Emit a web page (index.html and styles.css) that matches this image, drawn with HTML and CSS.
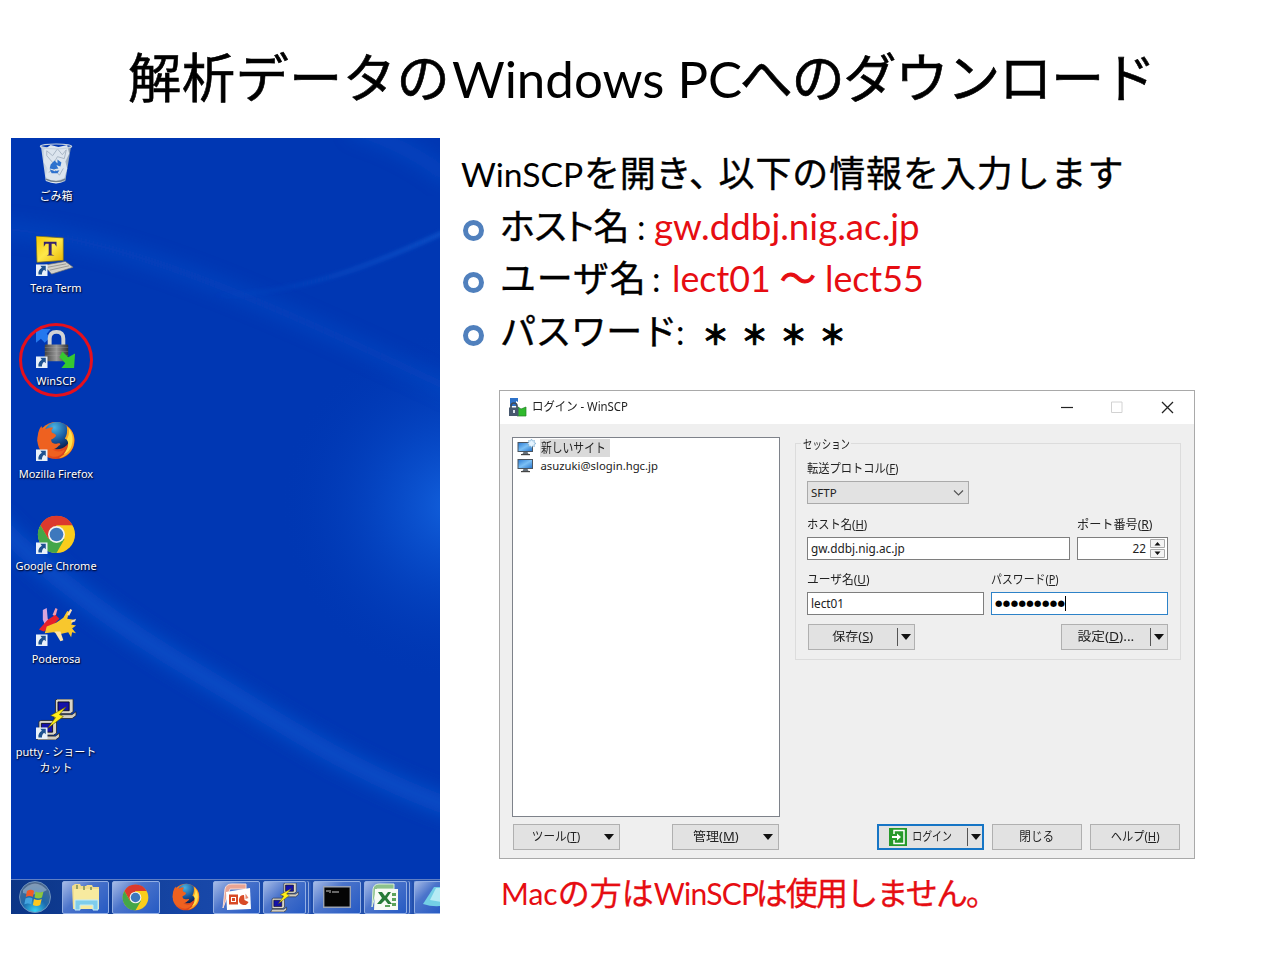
FILE: index.html
```html
<!DOCTYPE html>
<html lang="ja">
<head>
<meta charset="utf-8">
<title>解析データのWindows PCへのダウンロード</title>
<link rel="stylesheet" href="styles.css">
</head>
<body>
<svg class="defs" aria-hidden="true">
  <defs>
    <linearGradient id="gGlass" x1="0" x2="1"><stop offset="0" stop-color="#b9c8d8"/><stop offset=".5" stop-color="#eef3f8"/><stop offset="1" stop-color="#7f93ab"/></linearGradient>
    <linearGradient id="gLock" x1="0" x2="1"><stop offset="0" stop-color="#444"/><stop offset=".5" stop-color="#999"/><stop offset="1" stop-color="#333"/></linearGradient>
    <linearGradient id="gFox" x1="0" y1="0" x2="1" y2="1"><stop offset="0" stop-color="#f58220"/><stop offset=".6" stop-color="#e8501c"/><stop offset="1" stop-color="#c8331a"/></linearGradient>
    <radialGradient id="gGlobe" cx=".4" cy=".2" r=".8"><stop offset="0" stop-color="#49b4e4"/><stop offset=".6" stop-color="#17559c"/><stop offset="1" stop-color="#0b2354"/></radialGradient>
    <radialGradient id="gOrb" cx=".5" cy=".95" r=".9"><stop offset="0" stop-color="#35d5f5"/><stop offset=".45" stop-color="#1c69ad"/><stop offset="1" stop-color="#50698c"/></radialGradient>
    <linearGradient id="gYel" x1="0" y1="0" x2="1" y2="1"><stop offset="0" stop-color="#f5c800"/><stop offset=".5" stop-color="#ffe84a"/><stop offset="1" stop-color="#e8b400"/></linearGradient>
    <linearGradient id="gScr" x1="0" y1="0" x2="1" y2="1"><stop offset="0" stop-color="#2f7fd6"/><stop offset=".5" stop-color="#7cc0f5"/><stop offset="1" stop-color="#2a78cf"/></linearGradient>
    <symbol id="shortcut" viewBox="0 0 12 12"><rect width="12" height="12" fill="#e9f1fa"/><path d="M4.500 1.500H10V7L8.300 5.600C6.500 7 6 8.500 6.200 10.500H2.500C2 7.500 3.500 5 6 3.500z" fill="#1f5290"/></symbol>
    <symbol id="firefox" viewBox="0 0 40 40">
      <circle cx="20" cy="20" r="19" fill="url(#gFox)"/>
      <circle cx="21" cy="15" r="14" fill="url(#gGlobe)"/>
      <path d="M31 5c7 5 9 12 7 20-2 7-8 12-15 13 7-4 10-9 10-16-1-2-2-3-4-4 2-3 3-7 2-13z" fill="#f9a825"/>
      <path d="M33 7c4 6 5 12 3 18-1 4-4 7-8 9 4-5 6-11 3-15 2-3 3-7 2-12z" fill="#ffe14d"/>
      <path d="M5 5c0 2 2 3 5 3 2-1 5-2 7-1-2 2-2 4-1 5 3 1 4 2 4 3-1 2-3 3-5 4 0 2 1 4 3 4 3 1 4-1 6 0 1 1 0 2-1 2-2 2-4 4-7 4 4 3 9 3 13 0-2 6-8 9-14 7C7 33 2 27 1 20 1 14 2 9 5 5z" fill="#ee6120"/>
    </symbol>
    <symbol id="chrome" viewBox="0 0 40 40">
      <circle cx="20" cy="20" r="19" fill="#f9cd1c"/>
      <path d="M3.500 10.500A19 19 0 0 1 36.500 10.500H20L11.800 24.800z" fill="#dc3a2d"/>
      <path d="M3.500 10.500A19 19 0 0 0 20 39l8.200-14.300L20 20l-8.200 4.700z" fill="#44a648"/>
      <circle cx="20" cy="20" r="8.700" fill="#f3f3ef"/><circle cx="20" cy="20" r="7" fill="#3d78bd"/>
    </symbol>
    <symbol id="putty" viewBox="0 0 42 42">
      <g id="pc"><path d="M20 1l2-1h16v13l-3 2H20z" fill="#d8d4c8" stroke="#222" stroke-width=".8"/><path d="M22.500 3H34v9H22.500z" fill="#1512a8" stroke="#000" stroke-width=".8"/><path d="M20 16h17l4-3v4l-4 3H18z" fill="#cfcbbf" stroke="#222" stroke-width=".8"/></g>
      <use href="#pc" x="-17" y="22"/>
      <path d="M31 8L15 17l5 2-8 11 16-12-4-2z" fill="#ffef1a" stroke="#554e00" stroke-width=".6"/>
    </symbol>
    <symbol id="monitor" viewBox="0 0 17 15"><path d="M.5 1h15.500v10H.5z" fill="#4b5560"/><path d="M1.500 2h13.500v8H1.500z" fill="url(#gScr)"/><path d="M6.500 11h4l1 2H5.500z" fill="#66707a"/><path d="M4 13h9v1.200H4z" fill="#444"/></symbol>
  </defs>
</svg>

<main class="slide">
  <h1 class="title"><span class="t1">解析データの</span><span class="en">Windows PC</span><span class="t2">へのダウンロード</span></h1>
  <div class="columns">
    <section class="desktop">
      <svg class="wallpaper" viewBox="0 0 429 776" preserveAspectRatio="none">
        <defs>
          <filter id="soft" x="-30%" y="-30%" width="160%" height="160%"><feGaussianBlur stdDeviation="9"/></filter>
          <filter id="soft2" x="-30%" y="-30%" width="160%" height="160%"><feGaussianBlur stdDeviation="2"/></filter>
          <radialGradient id="glow"><stop offset="0" stop-color="#1566e2" stop-opacity=".9"/><stop offset=".4" stop-color="#0a52d0" stop-opacity=".6"/><stop offset="1" stop-color="#0038b4" stop-opacity="0"/></radialGradient>
          <linearGradient id="fade" gradientUnits="userSpaceOnUse" x1="200" y1="0" x2="429" y2="0"><stop offset="0" stop-color="#1a67dc" stop-opacity="0"/><stop offset="1" stop-color="#1f70e2"/></linearGradient>
        </defs>
        <rect width="429" height="776" fill="#0037b3"/>
        <ellipse cx="445" cy="368" rx="175" ry="175" fill="url(#glow)"/>
        <path d="M-20 380C40 440 110 490 190 537S340 635 450 673" fill="none" stroke="#0a56d0" stroke-width="18" opacity=".8" filter="url(#soft)"/>
        <path d="M-20 90C100 95 250 160 450 256" fill="none" stroke="#0d53ce" stroke-width="12" opacity=".5" filter="url(#soft)"/>
        <path d="M200 158C290 156 360 128 440 91" fill="none" stroke="url(#fade)" stroke-width="3" opacity=".65" filter="url(#soft2)"/>
        <path d="M340 -10Q400 8 440 42" fill="none" stroke="#0e54cf" stroke-width="14" opacity=".5" filter="url(#soft)"/>
      </svg>
      <ul class="icons">
        <li><svg class="ico" viewBox="0 0 42 42"><path d="M5 3l5 36q11 5 20 0l6-36q-15 5-31 0z" fill="url(#gGlass)"/><path d="M8 7l7-5 8 2 9-2 2 9-4 8 2 7-3 10-13 3-6-5 2-8-4-6z" fill="#dce5ee"/><path d="M11 8l6 5 5-7 5 6 4-5-2 9-7-2-4 7-7-8zM13 30l6-3 5 6 4-7" fill="none" stroke="#a7b5c4" stroke-width="1"/><ellipse cx="20.500" cy="3.500" rx="16" ry="2.500" fill="none" stroke="#c7d2de" stroke-width="1.200"/><path d="M15 22l4-4 4 4-2 1 2 3-5 1-4-1zM22 17l4 3-1 4-3-1zM14 27l5 2 5-1-2 3h-6z" fill="#2e72ce"/><path d="M10 37q11 5 20 0" fill="none" stroke="#71818f" stroke-width="1.500"/></svg><span>ごみ箱</span></li>
        <li><svg class="ico" viewBox="0 0 42 42"><path d="M0 0l28 2v23L1 27z" fill="url(#gYel)" stroke="#776d28" stroke-width=".8"/><path d="M8 6h13v5l-2-3h-3v11l3 1h-8l2-1V8h-3l-2 3z" fill="#35216f"/><path d="M8 30l22-4 8 6-22 7z" fill="#d3d1ca" stroke="#75756e" stroke-width=".7"/><path d="M12 32l19-3.500M14 35l20-4.500" stroke="#8f8f89" stroke-width=".8"/><use href="#shortcut" x="0" y="29" width="12" height="12"/></svg><span>Tera Term</span></li>
        <li class="marked"><svg class="ico" viewBox="0 0 42 42"><path d="M0 1h15l-4 5 3 4-5 5-4-4-5 4z" fill="#2478ee"/><path d="M14 20V11q0-7 7-7t7 7v9" fill="none" stroke="#d1d3d5" stroke-width="4"/><rect x="9" y="17" width="24" height="17" rx="1" fill="url(#gLock)"/><path d="M9 20h24M9 24h24M9 28h24" stroke="#bbb" stroke-opacity=".25"/><path d="M27 24l6 6 7-4-1 15H26l4-5-6-6z" fill="#36c82f"/><use href="#shortcut" x="0" y="29" width="12" height="12"/></svg><span>WinSCP</span><i class="ring"></i></li>
        <li><svg class="ico" viewBox="0 0 42 42"><use href="#firefox" width="41" height="40"/><use href="#shortcut" x="0" y="29" width="12" height="12"/></svg><span>Mozilla Firefox</span></li>
        <li><svg class="ico" viewBox="0 0 42 42"><use href="#chrome" x="1" y="1" width="40" height="40"/><use href="#shortcut" x="0" y="29" width="12" height="12"/></svg><span>Google Chrome</span></li>
        <li><svg class="ico" viewBox="0 0 42 42"><path d="M7 4l4-2 1 11 2 3-5 3-2-5z" fill="#d9a5dc"/><path d="M17 9l3-7 2 1-2 8z" fill="#ef9baf"/><path d="M3 24l9-10 8-5 4 4-7 7-9 6z" fill="#e8202a"/><path d="M11 21l10-4 7-5 4-7 2 1-2 7 7 1-3 5 5 1-4 3 4 5-4-1-1 5-3-5-9 2-6-2-9 1z" fill="#f8c72d"/><path d="M19 26l6 10 3-1-3-9" fill="#ffe3a6"/><path d="M32 9l3-6 2 1-3 6M36 15l5-2-1 3-4 1" fill="#f6dcb4"/><use href="#shortcut" x="0" y="29" width="12" height="12"/></svg><span>Poderosa</span></li>
        <li><svg class="ico" viewBox="0 0 42 42"><use href="#putty" width="42" height="42"/><use href="#shortcut" x="0" y="29" width="12" height="12"/></svg><span>putty - ショート<br>カット</span></li>
      </ul>
      <div class="taskbar">
        <div class="slot orb"><svg width="34" height="34" viewBox="0 0 34 34"><circle cx="17" cy="17" r="15.500" fill="url(#gOrb)" stroke="#6c91bd" stroke-width="1"/><path d="M5 10Q17-3 29 10Q17 17 5 13z" fill="#cfe0f0" opacity=".4"/><path d="M9 11q4-2.500 7 0l-1.200 6q-3.500-2-7 0z" fill="#ef5a29"/><path d="M17.500 11.500q4 2 8 0l-1.500 6q-3.500 2-7.500 0z" fill="#8cc63e"/><path d="M7.500 18.500q4-2 7 0l-1.200 6q-3.500-2-7 0z" fill="#44a5e0"/><path d="M16 19q4 2 7.700 0l-1.500 6q-3.500 2-7.300 0z" fill="#fdc820"/></svg></div>
        <div class="slot open"><svg width="30" height="28" viewBox="0 0 30 28"><path d="M1 3l3-2h5l1 2h5l1-1h5l1 2h6v22H2z" fill="#f0dd8e"/><path d="M3 6h25v20H3z" fill="#f7ea9f"/><path d="M6 2v4M13 3v4M20 4v3" stroke="#7a8f57" stroke-width="1.500"/><path d="M4 17h23v10h-5v-5H9v5H4z" fill="#7fcdec" stroke="#c6ecf7" stroke-width="1"/></svg></div>
        <div class="slot open"><svg width="27" height="27"><use href="#chrome"/></svg></div>
        <div class="slot"><svg width="28" height="28"><use href="#firefox"/></svg></div>
        <div class="slot open"><svg width="30" height="28" viewBox="0 0 30 28"><path d="M1 25L3 6Q4 1 10 1h14v5H8z" fill="#e9a494" stroke="#f9dcd5"/><path d="M4 9l24-4 1 21-24 1z" fill="#fff"/><path d="M7 11.500h9v10H7z" fill="#d84b28"/><path d="M9 14h5v5H9z" fill="#fff"/><path d="M10 15h3v3h-3z" fill="#d84b28"/><path d="M22 12a5 5 0 1 0 4.500 7l-4-2z" fill="#d84b28"/><path d="M23.500 10.500l3 4.500-3 1z" fill="#e98a6e"/></svg></div>
        <div class="slot open stack"><svg width="29" height="29"><use href="#putty"/></svg></div>
        <div class="slot open"><svg width="28" height="22" viewBox="0 0 28 22"><path d="M.7.7h26.600v20.600H.7z" fill="#050505" stroke="#9aa3b5" stroke-width="1.400"/><path d="M3 5h3M7 4v3M9 6h7" stroke="#ccc"/></svg></div>
        <div class="slot open stack"><svg width="28" height="28" viewBox="0 0 28 28"><path d="M1 24L2 6Q3 1 8 1h15v5H6z" fill="#8cc18b" stroke="#def0dc"/><path d="M4 6h23v21H3z" fill="#f7fbf5"/><path d="M7 9h4l3 4 3-4h3l-4 6 5 6h-4l-3-4-4 4H6l5-6z" fill="#267a37"/><path d="M21 10h4v3h-4zM21 15h4v3h-4zM21 20h4v3h-4zM14 22h5v2h-5z" fill="#5ca35c"/></svg></div>
        <div class="slot open last"><svg width="18" height="24" viewBox="0 0 18 24"><path d="M0 19L11 2h7v19q-9 1-18-2z" fill="#73cfe5"/><path d="M7 15L13 3h5v14z" fill="#b5ebf4"/></svg></div>
      </div>
    </section>

    <section class="guide">
      <p class="lead"><span class="en">WinSCP</span><span class="ja1">を開き、</span><span class="ja2">以下の情報を入力します</span></p>
      <ul class="facts">
        <li><span class="name n1">ホスト名</span><span class="en colon c1">:</span><span class="en red">gw.ddbj.nig.ac.jp</span></li>
        <li><span class="name n2">ユーザ名</span><span class="en colon c2">:</span><span class="en red e2">lect01 <span class="wave">〜</span> lect55</span></li>
        <li><span class="name n3">パスワード</span><span class="en colon c3">:</span><span class="stars">＊＊＊＊</span></li>
      </ul>

      <div class="dialog">
        <header class="bar">
          <svg width="19" height="19" viewBox="0 0 19 19"><path d="M2 0h8v4l-2-1v5H2z" fill="#2d72c9"/><path d="M10 9l3 2 5-2v9h-9z" fill="#2fba2c" stroke="#237e26" stroke-width=".7"/><path d="M3 10V8q0-3 3-3t3 3v2" fill="none" stroke="#3d4a5b" stroke-width="1.700"/><path d="M1 9.500h9.500V18H1z" fill="#47586e"/><path d="M5 12h2v3H5z" fill="#dbe3ed"/></svg>
          <span class="cap"><span class="k k-cap">ログイン - WinSCP</span></span>
          <svg class="ctl" width="120" height="16" viewBox="0 0 120 16"><path d="M3 8.500h12" stroke="#222" stroke-width="1.200"/><path d="M53.500 3h10.500v10.500H53.500z" fill="none" stroke="#d2d2d2"/><path d="M104 3l11 11M115 3l-11 11" stroke="#222" stroke-width="1.300"/></svg>
        </header>
        <div class="work">
          <div class="sites">
            <div class="site"><svg width="20" height="17" viewBox="0 0 20 17"><use href="#monitor" y="2" width="17" height="15"/><path d="M14.500 0l1 2 2-.5-.5 2 2 1-2 1 .5 2-2-.5-1 2-1-2-2 .5.500-2-2-1 2-1-.5-2 2 .5z" fill="#e6f4ff" stroke="#6da5cf" stroke-width=".6"/></svg><span class="pick"><span class="k k-new">新しいサイト</span></span></div>
            <div class="site"><svg width="20" height="16" viewBox="0 0 20 16"><use href="#monitor" width="17" height="15"/></svg><span class="host">asuzuki@slogin.hgc.jp</span></div>
          </div>
          <div class="group">
            <span class="legend"><span class="k k-leg">セッション</span></span>
            <div class="field"><label><span class="k k-pro">転送プロトコル(<u>F</u>)</span></label><div class="box select">SFTP<svg width="11" height="8" viewBox="0 0 11 8"><path d="M1 1.500l4.500 4.500L10 1.500" fill="none" stroke="#555" stroke-width="1.200"/></svg></div></div>
            <div class="row">
              <div class="field grow"><label><span class="k k-host">ホスト名(<u>H</u>)</span></label><div class="box">gw.ddbj.nig.ac.jp</div></div>
              <div class="field port"><label><span class="k k-port">ポート番号(<u>R</u>)</span></label><div class="box num">22<svg width="16" height="19" viewBox="0 0 16 19"><path d="M.5.5h14v8H.5zM.5 10.500h14v8H.5z" fill="#f4f4f4" stroke="#aaa"/><path d="M4.500 6.500h6l-3-3.500zM4.500 12.500h6l-3 3.500z" fill="#111"/></svg></div></div>
            </div>
            <div class="row">
              <div class="field half"><label><span class="k k-user">ユーザ名(<u>U</u>)</span></label><div class="box">lect01</div></div>
              <div class="field half"><label><span class="k k-pass">パスワード(<u>P</u>)</span></label><div class="box active"><span class="dots">●●●●●●●●●</span><i class="caret"></i></div></div>
            </div>
            <div class="row acts">
              <div class="btn split"><span class="txt"><span class="k k-save">保存(<u>S</u>)</span></span><i class="div"></i><i class="tri"></i></div>
              <div class="btn split"><span class="txt"><span class="k k-set">設定(<u>D</u>)...</span></span><i class="div"></i><i class="tri"></i></div>
            </div>
          </div>
        </div>
        <footer class="foot">
          <div class="btn drop b1"><span class="txt"><span class="k k-tool">ツール(<u>T</u>)</span></span><i class="tri"></i></div>
          <div class="btn drop b2"><span class="txt"><span class="k k-save">管理(<u>M</u>)</span></span><i class="tri"></i></div>
          <div class="btn split login"><svg width="18" height="18" viewBox="0 0 18 18"><path d="M0 0h18v18H0z" fill="#26992a"/><path d="M5 6V2.500h10v13H5V12" fill="none" stroke="#fff" stroke-width="1.500"/><path d="M3 8h5V5.500L12 9l-4 3.500V10H3z" fill="#fff"/></svg><span class="txt"><span class="k k-login">ログイン</span></span><i class="div"></i><i class="tri"></i></div>
          <div class="btn b4"><span class="k k-close">閉じる</span></div>
          <div class="btn b5"><span class="k k-help">ヘルプ(<u>H</u>)</span></div>
        </footer>
      </div>
      <p class="note"><span class="en">Mac</span><span>の方は</span><span class="en w">WinSCP</span><span class="rest">は使用しません。</span></p>
    </section>
  </div>
</main>
</body>
</html>
```
FILE: styles.css
```css
*, *::before { box-sizing: border-box; }
body { margin: 0; width: 1280px; height: 960px; overflow: hidden; background: #fff; color: #000; font-family: "Noto Sans CJK JP", sans-serif; }
p, ul, h1 { margin: 0; padding: 0; font-weight: 400; list-style: none; }
i { font-style: normal; }
svg { display: block; flex: none; }
.defs { position: absolute; width: 0; height: 0; }
.slide { height: 960px; padding-top: 37px; }
.en { font-family: Lato, "Noto Sans CJK JP", sans-serif; -webkit-text-stroke: 0; }

.title { display: flex; align-items: baseline; height: 100.500px; padding-left: 128px; font-size: 53.3px; line-height: 76px; white-space: nowrap; -webkit-text-stroke: .6px; }
.title .en { width: 287.500px; font-size: 51px; }
.title .t1 { width: 324px; letter-spacing: .4px; }
.title .t2 { letter-spacing: -1.400px; }

.columns { display: flex; gap: 21px; padding-left: 11px; }

.desktop { position: relative; display: flex; flex-direction: column; justify-content: space-between; width: 429px; height: 776px; overflow: hidden; color: #fff; }
.wallpaper { position: absolute; inset: 0; width: 429px; height: 776px; }
.icons { position: relative; width: 90px; font: 11px/16px "Noto Sans", "Noto Sans CJK JP", sans-serif; text-align: center; text-shadow: 1px 1px 1px #001040, 0 1px 2px #001040; white-space: nowrap; }
.icons li { position: relative; display: flex; flex-direction: column; align-items: center; height: 92.7px; padding-top: 5.500px; }
.icons .ico { width: 41px; height: 41px; margin-bottom: 3.500px; }
.icons .ring { position: absolute; left: 8px; top: .5px; width: 74px; height: 74px; border: 3px solid #e5101d; border-radius: 50%; }
.taskbar { position: relative; display: flex; gap: 3px; height: 35px; padding: 1px 0 0; background: linear-gradient(90deg, #0b3586, #1747a8 45%, #2552ae); border-top: 1px solid #5f7fc4; }
.slot { display: flex; align-items: center; justify-content: center; flex: none; width: 47.3px; height: 33px; border: 1px solid transparent; border-radius: 2px; }
.slot.orb { width: 48px; border: 0; }
.slot.open { border-color: #93afe4; background: linear-gradient(135deg, #a5bae6 0, #4b74cb 40%, #265ac3 100%); }
.slot.stack { width: 43px; margin-right: 4.300px; box-shadow: 2px 0 0 #2b59b9, 3px 0 0 #92abdd, 5px 0 0 #2b59b9; }
.slot.last { width: 27px; padding: 0; border-right: 0; border-radius: 2px 0 0 2px; justify-content: flex-end; }

.guide { width: 780px; padding-top: 7px; }
.lead, .facts { font-size: 36px; line-height: 53px; white-space: nowrap; -webkit-text-stroke: .4px; }
.lead { display: flex; align-items: baseline; height: 53px; }
.lead .en { width: 123px; font-size: 33.700px; }
.ja1 { width: 134.500px; letter-spacing: -.2px; }
.ja2 { letter-spacing: .9px; }
.facts li { display: flex; align-items: baseline; height: 52.7px; padding-left: 39px; position: relative; }
.facts li::before { content: ""; position: absolute; left: 2px; top: 22px; width: 21px; height: 21px; border: 5px solid #5080bd; border-radius: 50%; }
.facts .en { font-size: 36.700px; }
.facts .e2 { font-size: 35.800px; }
.wave { -webkit-text-stroke: 1px; }
.facts .red, .note { color: #e60d12; }
.n1 { width: 137px; letter-spacing: -.5px; font-feature-settings: "palt"; }
.n2 { width: 152px; letter-spacing: .8px; }
.n3 { width: 176px; letter-spacing: -.6px; }
.facts .colon { font-size: 34px; }
.c1 { width: 17px; }
.c2 { width: 20px; }
.c3 { width: 26px; }
.stars { font-size: 27px; font-weight: 700; letter-spacing: 12px; -webkit-text-stroke: 1px; }

.dialog { width: 696px; height: 469px; margin: 34px 0 0 37.500px; border: 1px solid #a9a9a9; background: #efefef; font: 11.500px/16px "Noto Sans", "Noto Sans CJK JP", sans-serif; color: #222; white-space: nowrap; }
.bar { display: flex; align-items: center; height: 33px; padding-left: 8px; background: #fff; }
.cap { flex: 1; margin-left: 5px; }
.ctl { margin-right: 16px; }
.k { display: inline-block; font-size: 12.500px; transform: scaleX(.9); transform-origin: left; }
.k-cap { transform: scaleX(.91); }
.k-new { font-size: 13px; transform: scaleX(.83); }
.k-leg { transform: scaleX(.75); }
.k-port { transform: scaleX(.97); }
.k-user { transform: scaleX(.94); }
.k-pass { transform: scaleX(.87); }
.k-save { transform: scaleX(1.04); }
.k-set { transform: scaleX(1.1); }
.k-tool, .k-close { transform: scaleX(.93); }
.k-login { transform: scaleX(.79); }
.work { display: flex; align-items: flex-start; gap: 15px; padding: 13px 0 0 12px; }
.sites { width: 268px; height: 380px; padding: 1px 0 0 4px; border: 1px solid #7e828a; background: #fff; }
.site { display: flex; align-items: center; height: 18.500px; gap: 3px; }
.pick { width: 70px; height: 18px; padding-left: 1px; line-height: 17px; background: #dadada; }
.host { padding-left: 1px; font-size: 11.300px; }
.group { position: relative; width: 386px; height: 217px; margin-top: 6px; padding: 17.500px 11px 0 11.500px; border: 1px solid #dcdcdc; }
.legend { position: absolute; left: 5px; top: -7px; width: 50px; padding-left: 2px; line-height: 15px; background: #efefef; }
.row { display: flex; gap: 7px; margin-top: 12.500px; }
.field label { display: block; height: 16px; margin-bottom: 4px; }
.box { display: flex; align-items: center; height: 23px; padding: 0 3px 1px; border: 1px solid #7e7e7e; background: #fff; font-size: 11.800px; }
.select { width: 162px; padding: 0 4px 0 3px; justify-content: space-between; background: #e2e2e2; border-color: #aaa; font-size: 11.500px; }
.grow { width: 263px; }
.port { width: 91px; }
.half { width: 177px; }
.num { justify-content: flex-end; gap: 4px; padding: 0 1px 0 0; }
.active { border-color: #2d82c8; padding-left: 3px; }
.dots { font: 8.500px/12px "DejaVu Sans", sans-serif; letter-spacing: .4px; color: #000; }
.caret { width: 1px; height: 15px; background: #000; }
.acts { justify-content: space-between; margin: 9px 1px 0; }
.btn { display: flex; align-items: center; justify-content: center; height: 26px; border: 1px solid #b0b0b0; background: #e2e2e2; }
.btn .k { transform-origin: center; }
.btn .txt { flex: 1; min-width: 0; text-align: center; }
.split, .drop { width: 107px; padding-right: 3px; }
.div { flex: none; width: 1px; height: 18px; margin-right: 3px; background: #555; }
.tri { flex: none; width: 0; height: 0; border: 5px solid transparent; border-top: 6px solid #111; border-bottom: 0; }
.foot { display: flex; align-items: center; padding: 7px 0 0 13px; }
.b1 .txt { padding-right: 5px; }
.b2 { margin-left: 52px; }
.b2 .txt { padding-right: 3px; }
.login { margin-left: 98px; border: 2px solid #1675c5; padding-left: 10px; padding-right: 1px; }
.login .txt { padding-right: 8px; }
.drop { padding-right: 5px; }
.b4, .b5 { width: 89.500px; margin-left: 8.500px; }
.note { display: flex; align-items: baseline; margin: 7px 0 0 40px; font-size: 32px; line-height: 50px; white-space: nowrap; -webkit-text-stroke: .3px; }
.note .en { font-size: 30px; }
.note .w { width: 102px; letter-spacing: -.7px; }
.rest { letter-spacing: -1.800px; }
```
